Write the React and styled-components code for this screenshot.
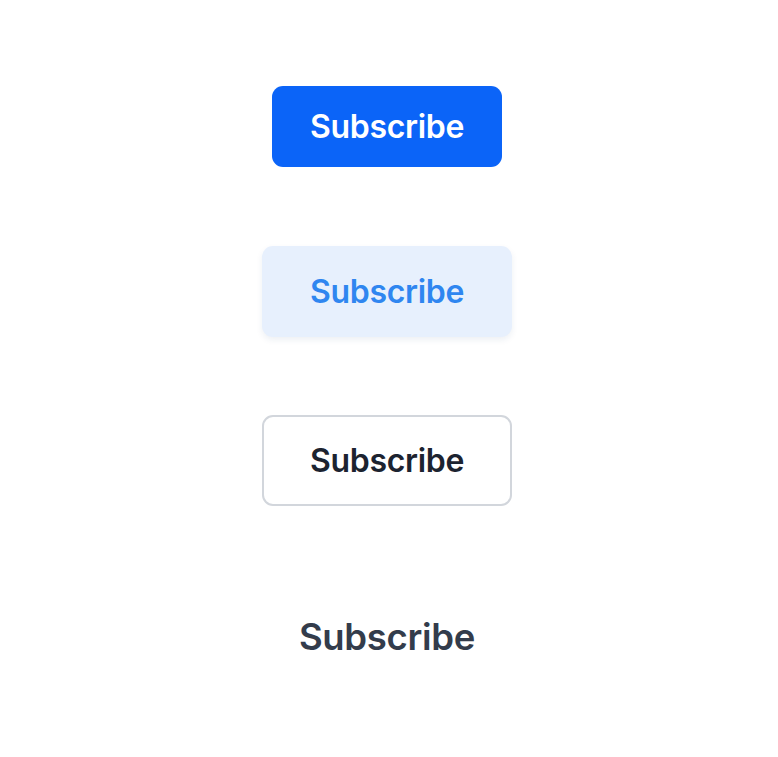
import React from "react"
import styled, { createGlobalStyle, css } from "styled-components"

const GlobalStyle = createGlobalStyle`
  body {
    margin: 0;
    background: #FFFFFF;
    font-family: Inter, "Noto Sans", sans-serif;
  }
`

const Page = styled.div`
  display: flex;
  flex-direction: column;
  align-items: center;
  padding-top: 86px;
  padding-right: 4px;
`

const variants = {
  solid: css`
    width: 230px;
    height: 81px;
    background: #0B64F8;
    color: #FFFFFF;
    border: none;
    font-size: 32px;
    margin-bottom: 79px;
  `,
  soft: css`
    width: 250px;
    height: 91px;
    background: #E7F0FD;
    color: #2F86F0;
    border: none;
    box-shadow: 0 3px 6px rgba(30, 60, 120, 0.08);
    font-size: 32px;
    margin-bottom: 78px;
  `,
  outline: css`
    width: 250px;
    height: 91px;
    background: #FFFFFF;
    color: #1C2330;
    border: 2px solid #D2D6DC;
    font-size: 32px;
    margin-bottom: 85px;
  `,
  ghost: css`
    width: 250px;
    height: 91px;
    background: transparent;
    color: #333C4B;
    border: none;
    font-size: 36.5px;
  `,
}

const Button = styled.button`
  display: flex;
  align-items: center;
  justify-content: center;
  box-sizing: border-box;
  border-radius: 11px;
  font-family: Inter, "Noto Sans", sans-serif;
  font-weight: 600;
  letter-spacing: -0.3px;
  cursor: pointer;
  ${(p) => variants[p.$variant]}
`

export default function App() {
  return (
    <>
      <GlobalStyle />
      <Page>
        <Button $variant="solid">Subscribe</Button>
        <Button $variant="soft">Subscribe</Button>
        <Button $variant="outline">Subscribe</Button>
        <Button $variant="ghost">Subscribe</Button>
      </Page>
    </>
  )
}
